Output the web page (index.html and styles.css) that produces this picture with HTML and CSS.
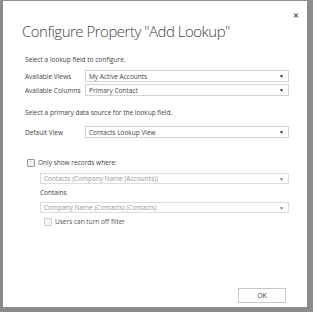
FILE: index.html
```html
<!DOCTYPE html>
<html>
<head>
    <title>Configure Property</title>
    <link rel="stylesheet" href="styles.css">
</head>
<body>
    <div class="dialog">
        <div class="close">&#x2715;</div>
        <h1 class="title">Configure Property "Add Lookup"</h1>

        <p class="note first">Select a lookup field to configure.</p>
        <div class="row">
            <label>Available Views</label>
            <div class="select"><span>My Active Accounts</span><i class="arrow">&#9660;</i></div>
        </div>
        <div class="row">
            <label>Available Columns</label>
            <div class="select"><span>Primary Contact</span><i class="arrow">&#9660;</i></div>
        </div>

        <p class="note second">Select a primary data source for the lookup field.</p>
        <div class="row">
            <label>Default View</label>
            <div class="select"><span>Contacts Lookup View</span><i class="arrow">&#9660;</i></div>
        </div>

        <div class="check main">
            <span class="box"></span>
            <span>Only show records where:</span>
        </div>
        <div class="filter">
            <div class="select disabled"><span>Contacts (Company Name (Accounts))</span><i class="arrow">&#9660;</i></div>
            <div class="sub-label">Contains</div>
            <div class="select disabled"><span>Company Name (Contacts) (Contacts)</span><i class="arrow">&#9660;</i></div>
            <div class="check off">
                <span class="box"></span>
                <span>Users can turn off filter</span>
            </div>
        </div>

        <div class="footer">
            <button type="button">OK</button>
        </div>
    </div>
</body>
</html>
```

FILE: styles.css
```css
body {
    margin: 0;
    background-color: #8c8c8c;
    font-family: "Open Sans", "Segoe UI", sans-serif;
    color: #444;
}

.dialog {
    position: relative;
    box-sizing: border-box;
    width: 304px;
    height: 306px;
    margin: 1px 0 0 3px;
    background-color: #fff;
    padding: 0 18px 0 19px;
    display: flex;
    flex-direction: column;
}

.close {
    position: absolute;
    top: 10px;
    right: 8px;
    font-size: 7px;
    font-weight: bold;
    color: #555;
}

.title {
    margin: 19px 0 0 0;
    font-size: 15px;
    font-weight: 300;
    letter-spacing: -0.5px;
    color: #444;
    line-height: 22px;
    white-space: nowrap;
}

.note {
    margin: 0;
    font-size: 6.5px;
    line-height: 10px;
    padding-left: 3px;
}

.note.first {
    margin-top: 13px;
}

.note.second {
    margin-top: 12px;
}

.row {
    display: flex;
    align-items: center;
    margin-top: 2px;
    padding-left: 3px;
}

.note + .row {
    margin-top: 5px;
}

.note.second + .row {
    margin-top: 8px;
}

.row label {
    width: 60px;
    font-size: 6.5px;
}

.select {
    flex: 1;
    box-sizing: border-box;
    height: 12px;
    border: 1px solid #d4d4d4;
    display: flex;
    align-items: center;
    justify-content: space-between;
    padding: 0 4px 0 3px;
    font-size: 6.5px;
    color: #444;
}

.arrow {
    font-style: normal;
    font-size: 5px;
    color: #222;
}

.select.disabled {
    color: #999;
    border-color: #dcdcdc;
}

.select.disabled .arrow {
    color: #777;
}

.check {
    display: flex;
    align-items: center;
    gap: 3px;
    font-size: 6.5px;
}

.check.main {
    margin-top: 20px;
    padding-left: 5px;
}

.box {
    width: 6px;
    height: 6px;
    border: 1px solid #999;
    border-radius: 1px;
    background-color: #f2f2f2;
}

.filter {
    padding-left: 18px;
    margin-top: 6px;
    display: flex;
    flex-direction: column;
}

.sub-label {
    font-size: 6.5px;
    line-height: 10px;
    margin: 4px 0 4px 0;
}

.check.off {
    margin-top: 4px;
    padding-left: 4px;
    color: #555;
}

.check.off .box {
    border-color: #ccc;
    background-color: #f5f5f5;
}

.footer {
    margin-top: auto;
    margin-bottom: 4px;
    display: flex;
    justify-content: flex-end;
}

button {
    width: 48px;
    height: 15px;
    border: 1px solid #c8c8c8;
    background-color: #fff;
    font-family: inherit;
    font-size: 7px;
    color: #444;
    padding: 0;
    margin-right: 3px;
}
```
